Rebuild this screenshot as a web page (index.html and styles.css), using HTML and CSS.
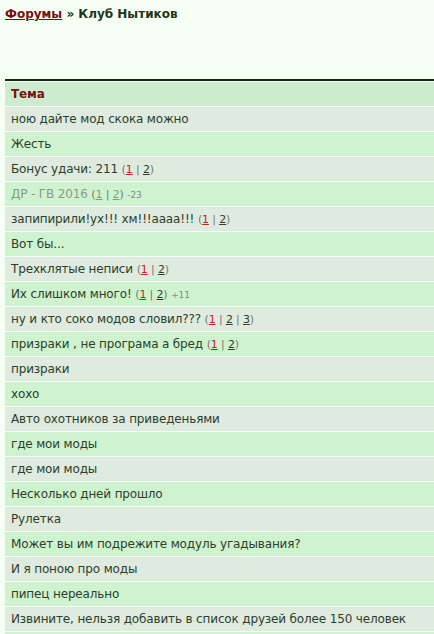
FILE: index.html
```html
<!DOCTYPE html>
<html lang="ru">
<head>
    <meta charset="UTF-8">
    <meta name="viewport" content="width=device-width, initial-scale=1.0">
    <title>Клуб Нытиков</title>
    <link rel="stylesheet" href="styles.css">
</head>
<body>
    <div class="crumbs">
        <a href="#">Форумы</a> » Клуб Нытиков
    </div>

    <table class="topics">
        <thead>
            <tr><th>Тема</th></tr>
        </thead>
        <tbody>
            <tr><td>ною дайте мод скока можно</td></tr>
            <tr><td>Жесть</td></tr>
            <tr><td>Бонус удачи: 211 <span class="pages">(<a class="new" href="#">1</a> | <a href="#">2</a>)</span></td></tr>
            <tr class="closed"><td>ДР - ГВ 2016 <span class="pages">(<a href="#">1</a> | <a href="#">2</a>)</span> <small>-23</small></td></tr>
            <tr><td>запипирили!ух!!! хм!!!аааа!!! <span class="pages">(<a class="new" href="#">1</a> | <a href="#">2</a>)</span></td></tr>
            <tr><td>Вот бы...</td></tr>
            <tr><td>Трехклятые неписи <span class="pages">(<a class="new" href="#">1</a> | <a href="#">2</a>)</span></td></tr>
            <tr><td>Их слишком много! <span class="pages">(<a class="new" href="#">1</a> | <a href="#">2</a>)</span> <small>+11</small></td></tr>
            <tr><td>ну и кто соко модов словил??? <span class="pages">(<a class="new" href="#">1</a> | <a href="#">2</a> | <a href="#">3</a>)</span></td></tr>
            <tr><td>призраки , не програма а бред <span class="pages">(<a class="new" href="#">1</a> | <a href="#">2</a>)</span></td></tr>
            <tr><td>призраки</td></tr>
            <tr><td>хохо</td></tr>
            <tr><td>Авто охотников за приведеньями</td></tr>
            <tr><td>где мои моды</td></tr>
            <tr><td>где мои моды</td></tr>
            <tr><td>Несколько дней прошло</td></tr>
            <tr><td>Рулетка</td></tr>
            <tr><td>Может вы им подрежите модуль угадывания?</td></tr>
            <tr><td>И я поною про моды</td></tr>
            <tr><td>пипец нереально</td></tr>
            <tr><td>Извините, нельзя добавить в список друзей более 150 человек</td></tr>
            <tr><td>&nbsp;</td></tr>
        </tbody>
    </table>
</body>
</html>
```

FILE: styles.css
```css
body {
    margin: 0;
    padding: 0 0 0 5px;
    background-color: #f5fff4;
    font-family: "DejaVu Sans", Verdana, sans-serif;
    font-size: 12px;
    color: #2c3e2c;
    overflow: hidden;
}

.crumbs {
    padding-top: 7px;
    height: 73px;
    font-weight: bold;
    color: #1d351d;
}

.crumbs a {
    color: #7a0f0f;
}

table.topics {
    width: 440px;
    border-collapse: separate;
    border-spacing: 0 1px;
    border-top: 2px solid #132613;
    margin-top: -1px;
}

th, td {
    height: 24px;
    padding: 0 6px;
    text-align: left;
    white-space: nowrap;
    letter-spacing: -0.15px;
}

th {
    background-color: #cdeccf;
    color: #7a1010;
    font-weight: bold;
}

tbody tr:nth-child(odd) td {
    background-color: #dfebdf;
}

tbody tr:nth-child(even) td {
    background-color: #cff3cf;
}

.pages {
    color: #777;
    font-size: 11px;
}

.pages a {
    color: #2c3e2c;
}

.pages a.new {
    color: #cc2020;
}

small {
    font-size: 9px;
    color: #888;
}

tr.closed td {
    color: #8a9a8a;
}

tr.closed .pages a {
    color: #8a9a8a;
}
```
